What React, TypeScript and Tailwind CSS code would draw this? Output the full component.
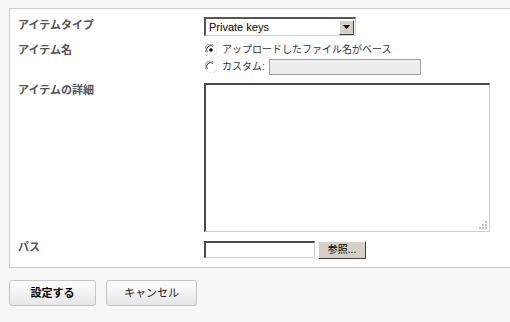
import React from 'react';

const labelCls = "w-[186px] shrink-0 text-[11px] leading-[14px] font-bold text-[#555555]";

function Radio({ checked }: { checked?: boolean }) {
  return (
    <svg width="12" height="12" viewBox="0 0 12 12" className="shrink-0">
      <circle cx="6" cy="6" r="5.5" fill="#ffffff" />
      <path d="M1.2 8.5 A5.2 5.2 0 0 1 8.5 1.2" fill="none" stroke="#808080" strokeWidth="1" />
      <path d="M2.3 8 A4.1 4.1 0 0 1 8 2.3" fill="none" stroke="#404040" strokeWidth="1" />
      <path d="M3.5 10.8 A5.2 5.2 0 0 0 10.8 3.5" fill="none" stroke="#e0e0e0" strokeWidth="1" />
      {checked && <circle cx="6" cy="6" r="1.8" fill="#000000" />}
    </svg>
  );
}

export default function App() {
  return (
    <div className="w-[510px] h-[322px] overflow-hidden bg-[#f7f7f7] pt-[8px] pl-[9px] font-['Liberation_Sans','Noto_Sans_CJK_JP',sans-serif]">
      {/* Form panel */}
      <div className="h-[260px] bg-white border border-r-0 border-[#cccccc] pl-[8px] pt-[8px]">
        {/* Item type */}
        <div className="flex h-[19px]">
          <div className={labelCls + " pt-[1px]"}>アイテムタイプ</div>
          <div className="w-[152px] h-[19px] flex items-center border-t-2 border-l-2 border-[#555555] border-r border-b border-r-[#d0d0d0] border-b-[#d0d0d0] bg-white">
            <span className="flex-1 pl-[3px] text-[11px] text-black leading-none">Private keys</span>
            <div className="w-[15px] h-[15px] mr-[1px] flex items-center justify-center bg-[#d4d0c8] border border-t-white border-l-white border-r-[#404040] border-b-[#404040]">
              <svg width="7" height="4" viewBox="0 0 7 4">
                <path d="M0 0 H7 L3.5 4 Z" fill="#000000" />
              </svg>
            </div>
          </div>
        </div>

        {/* Item name */}
        <div className="flex mt-[5px]">
          <div className={labelCls + " pt-[2px]"}>アイテム名</div>
          <div className="flex flex-col">
            <div className="flex items-center h-[17px] pl-[1px]">
              <Radio checked />
              <span className="ml-[5px] text-[10px] text-[#333333] leading-none">アップロードしたファイル名がベース</span>
            </div>
            <div className="flex items-center h-[18px] pl-[1px]">
              <Radio />
              <span className="ml-[5px] text-[10px] text-[#333333] leading-none">カスタム:</span>
              <div className="ml-[4px] w-[152px] h-[16px] bg-[#ececec] border border-[#a0a0a0]" />
            </div>
          </div>
        </div>

        {/* Item detail */}
        <div className="flex mt-[7px]">
          <div className={labelCls}>アイテムの詳細</div>
          <div className="relative w-[286px] h-[149px] bg-white border-t-2 border-l-2 border-[#4a4a4a] border-r border-b border-r-[#cccccc] border-b-[#cccccc]">
            <svg width="9" height="9" viewBox="0 0 9 9" className="absolute right-[1px] bottom-[1px]">
              <rect x="6" y="0" width="2" height="2" fill="#c0c0c0" />
              <rect x="3" y="3" width="2" height="2" fill="#c0c0c0" />
              <rect x="6" y="3" width="2" height="2" fill="#c0c0c0" />
              <rect x="0" y="6" width="2" height="2" fill="#c0c0c0" />
              <rect x="3" y="6" width="2" height="2" fill="#c0c0c0" />
              <rect x="6" y="6" width="2" height="2" fill="#c0c0c0" />
            </svg>
          </div>
        </div>

        {/* Path */}
        <div className="flex mt-[9px]">
          <div className={labelCls + " -mt-[1px]"}>パス</div>
          <div className="flex items-start">
            <div className="w-[111px] h-[17px] bg-white border-t-2 border-l-2 border-[#4a4a4a] border-r border-b border-r-[#cccccc] border-b-[#cccccc]" />
            <div className="ml-[3px] w-[48px] h-[18px] flex items-center justify-center bg-[#d4d0c8] border border-t-white border-l-white border-r-[#404040] border-b-[#404040] text-[10px] text-black leading-none">
              参照...
            </div>
          </div>
        </div>
      </div>

      {/* Buttons */}
      <div className="flex gap-[10px] mt-[12px]">
        <div className="w-[87px] h-[26px] flex items-center justify-center rounded-[3px] border border-[#c4c4c4] bg-gradient-to-b from-white to-[#e6e6e6] text-[11px] font-bold text-black">
          設定する
        </div>
        <div className="w-[91px] h-[26px] flex items-center justify-center rounded-[3px] border border-[#c4c4c4] bg-gradient-to-b from-white to-[#e6e6e6] text-[11px] text-[#222222]">
          キャンセル
        </div>
      </div>
    </div>
  );
}
